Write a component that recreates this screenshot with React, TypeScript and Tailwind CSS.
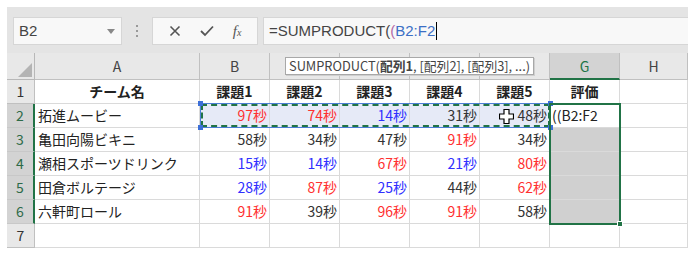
const FONT = "font-['Noto_Sans_CJK_JP',sans-serif]";

type Row = { name: string; scores: number[] };

const rows: Row[] = [
  { name: "拓進ムービー", scores: [97, 74, 14, 31, 48] },
  { name: "亀田向陽ビキニ", scores: [58, 34, 47, 91, 34] },
  { name: "瀬相スポーツドリンク", scores: [15, 14, 67, 21, 80] },
  { name: "田倉ボルテージ", scores: [28, 87, 25, 44, 62] },
  { name: "六軒町ロール", scores: [91, 39, 96, 91, 58] },
];

// C..F letters sit under the argument tooltip, so they are left blank
const cols = ["A", "B", "", "", "", "", "G", "H"];

// red for slow, blue for fast
function scoreColor(n: number) {
  if (n >= 60) return "text-[#ff3030]";
  if (n <= 30) return "text-[#3030ff]";
  return "text-[#333333]";
}

const gridCols = "grid-cols-[28px_165px_70px_70px_70px_70px_70px_70px_68px]";

function FormulaBar() {
  return (
    <div className="flex h-[46px] items-start pt-[10px] pl-[6px]">
      {/* Name box */}
      <div className="flex h-[28px] w-[109px] items-center justify-between border border-[#d6d6d6] bg-[#f8f8f8] pl-[5px] pr-[6px]">
        <span className="font-['Liberation_Sans',sans-serif] text-[15px] text-[#444]">B2</span>
        <svg width="8" height="5" viewBox="0 0 8 5">
          <path d="M0 0 L8 0 L4 5 Z" fill="#888" />
        </svg>
      </div>
      {/* Grip dots */}
      <div className="flex h-[28px] w-[30px] flex-col items-center justify-center gap-[3px]">
        <span className="h-[2px] w-[2px] bg-[#999]" />
        <span className="h-[2px] w-[2px] bg-[#999]" />
        <span className="h-[2px] w-[2px] bg-[#999]" />
      </div>
      {/* Cancel / Enter / fx */}
      <div className="flex h-[28px] w-[106px] items-center justify-around border border-[#d6d6d6] bg-[#f8f8f8] px-[6px]">
        <svg width="12" height="12" viewBox="0 0 12 12">
          <path d="M1.5 1.5 L10.5 10.5 M10.5 1.5 L1.5 10.5" stroke="#555" strokeWidth="1.6" />
        </svg>
        <svg width="14" height="12" viewBox="0 0 14 12">
          <path d="M1 6 L5 10 L13 1.5" stroke="#555" strokeWidth="1.8" fill="none" />
        </svg>
        <span className="font-['Liberation_Serif',serif] text-[15px] italic text-[#555]">
          f<span className="text-[10px]">x</span>
        </span>
      </div>
      {/* Formula input */}
      <div className="ml-[5px] flex h-[28px] flex-1 items-center border border-[#d6d6d6] border-r-0 bg-[#f8f8f8] pl-[5px]">
        <span className="font-['Liberation_Sans',sans-serif] text-[15px] text-[#444]">
          =SUMPRODUCT(<span className="text-[#b36aa8]">(</span>
          <span className="text-[#3c6fc5]">B2:F2</span>
        </span>
        <span className="ml-[1px] h-[18px] w-[1px] bg-black" />
      </div>
    </div>
  );
}

function ColumnHeaders() {
  return (
    <>
      <div className="relative h-[27px] border-r border-b border-[#b8b8b8] bg-[#e8e8e8]">
        <svg className="absolute right-[2px] bottom-[2px]" width="14" height="14" viewBox="0 0 14 14">
          <path d="M14 0 L14 14 L0 14 Z" fill="#b4b4b4" />
        </svg>
      </div>
      {cols.map((c, i) => (
        <div
          key={i}
          className={
            c === "G"
              ? `flex h-[27px] items-center justify-center border-r border-b-2 border-r-[#c0c0c0] border-b-[#217346] bg-[#d3d3d3] pt-[2px] ${FONT} text-[14px] text-[#217346]`
              : `flex h-[27px] items-center justify-center border-r border-b border-[#c0c0c0] bg-[#e8e8e8] ${FONT} text-[14px] text-[#444]`
          }
        >
          {c}
        </div>
      ))}
    </>
  );
}

function RowHeader({ n, active }: { n: number; active: boolean }) {
  return (
    <div
      className={
        active
          ? `flex h-[24px] items-center justify-center border-r-2 border-b border-r-[#217346] border-b-[#c8c8c8] bg-[#d3d3d3] ${FONT} text-[14px] text-[#2d6a48]`
          : `flex h-[24px] items-center justify-center border-r border-b border-[#c0c0c0] bg-[#e8e8e8] ${FONT} text-[14px] text-[#333]`
      }
    >
      {n}
    </div>
  );
}

const cell = `h-[24px] border-r border-b border-[#dadada] ${FONT} text-[14px] leading-[23px]`;

export default function App() {
  return (
    <div className="h-[254px] w-[698px] bg-white p-[7px]">
      <div className="h-[241px] w-[681px] overflow-hidden bg-[#e4e4e4]">
        <FormulaBar />

        <div className={`relative grid ${gridCols}`}>
          <ColumnHeaders />

          {/* Row 1: titles */}
          <RowHeader n={1} active={false} />
          <div className={`${cell} bg-white text-center font-bold text-[#222]`}>チーム名</div>
          {[1, 2, 3, 4, 5].map((i) => (
            <div key={i} className={`${cell} bg-white text-center font-bold text-[#222]`}>
              課題{i}
            </div>
          ))}
          <div className={`${cell} bg-white text-center font-bold text-[#222]`}>評価</div>
          <div className={`${cell} bg-white`} />

          {rows.map((r, ri) => (
            <div key={r.name} className="contents">
              <RowHeader n={ri + 2} active />
              <div className={`${cell} bg-white pl-[3px] text-[#222]`}>{r.name}</div>
              {r.scores.map((s, si) => (
                <div
                  key={si}
                  className={`${cell} pr-[2px] text-right ${scoreColor(s)} ${ri === 0 ? "bg-[#e6eaf7]" : "bg-white"}`}
                >
                  {s}秒
                </div>
              ))}
              <div className={`${cell} ${ri === 0 ? "bg-white pl-[2px] text-[#222]" : "bg-[#d0d0d0]"}`}>
                {ri === 0 ? "((B2:F2" : ""}
              </div>
              <div className={`${cell} bg-white`} />
            </div>
          ))}

          {/* Row 7: empty */}
          <RowHeader n={7} active={false} />
          {cols.map((_, i) => (
            <div key={i} className={`${cell} bg-white`} />
          ))}

          {/* Argument tooltip */}
          <div className="absolute top-[4px] left-[278px] flex h-[18px] w-[249px] items-center border border-[#a8a8a8] bg-white pl-[3px] font-['Noto_Sans_CJK_JP',sans-serif] text-[12.8px] text-[#444] shadow-[1px_1px_0_#cfcfcf]">
            SUMPRODUCT(<b className="font-bold">配列1</b>, [配列2], [配列3], ...)
          </div>

          {/* B2:F2 reference range */}
          <div className="pointer-events-none absolute top-[50px] left-[193px] h-[25px] w-[351px] border border-[#4d7fd6]">
            <div className="absolute inset-0 border-2 border-dashed border-[#217346]" />
            <span className="absolute -top-[3px] -left-[3px] h-[5px] w-[5px] bg-[#3c6fd8]" />
            <span className="absolute -top-[3px] -right-[3px] h-[5px] w-[5px] bg-[#3c6fd8]" />
            <span className="absolute -bottom-[3px] -left-[3px] h-[5px] w-[5px] bg-[#3c6fd8]" />
            <span className="absolute -right-[3px] -bottom-[3px] h-[5px] w-[5px] bg-[#3c6fd8]" />
          </div>

          {/* G2:G6 selection */}
          <div className="pointer-events-none absolute top-[50px] left-[542px] h-[122px] w-[72px] border-2 border-[#217346]">
            <span className="absolute -right-[4px] -bottom-[4px] h-[6px] w-[6px] border border-white bg-[#217346]" />
          </div>

          {/* Cell cursor */}
          <svg className="pointer-events-none absolute top-[56px] left-[492px]" width="15" height="15" viewBox="0 0 15 15">
            <path
              d="M5 0.5 H10 V5 H14.5 V10 H10 V14.5 H5 V10 H0.5 V5 H5 Z"
              fill="white"
              stroke="black"
              strokeWidth="1.2"
            />
          </svg>
        </div>
      </div>
    </div>
  );
}
